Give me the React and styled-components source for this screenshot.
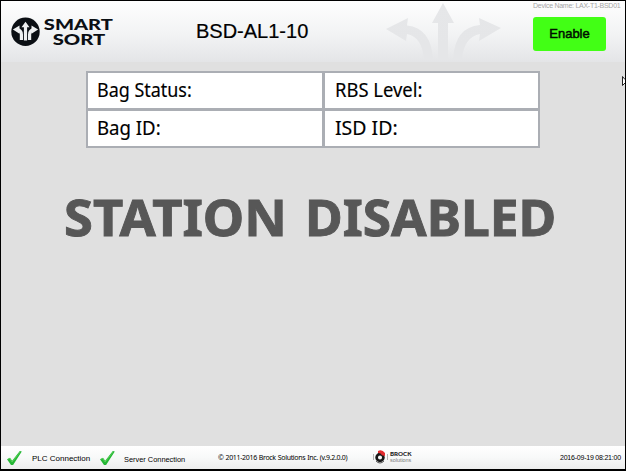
import React from "react";
import styled, { createGlobalStyle } from "styled-components";

const GlobalStyle = createGlobalStyle`
  * { box-sizing: border-box; }
  body { margin: 0; background: #000; overflow: hidden; }
`;

const Screen = styled.div`
  display: flex;
  flex-direction: column;
  width: 626px;
  height: 471px;
  position: relative;
  border: 1px solid #000;
  border-bottom-width: 2px;
  background: #e0e0e0;
  color: #000;
  font-family: "Liberation Sans", Arial, sans-serif;
  white-space: nowrap;
`;

const Header = styled.header`
  display: grid;
  grid-template-columns: 195px 190px 147px 1fr;
  height: 61px;
  background: linear-gradient(#fefefe, #f2f3f4 55%, #e4e5e7);
`;

const Brand = styled.div`
  display: flex;
  padding: 15.5px 0 0 9.5px;
`;

const BrandName = styled.div`
  display: flex;
  flex-direction: column;
  align-items: center;
  margin-left: 3px;
  width: 70px;
  font: 900 15.3px/15.5px Lato, sans-serif;
  color: #0b0f14;
`;

const Label = styled.span`
  display: inline-block;
  transform: scaleX(${(p) => p.$stretch || 1});
  transform-origin: ${(p) => p.$origin || "left"} center;
`;

const StationName = styled.h1`
  margin: 0;
  padding-top: 18px;
  font-size: 20px;
  font-weight: 400;
  line-height: 24px;
  -webkit-text-stroke: 0.2px #000;
`;

const ArrowArea = styled.div`
  height: 61px;
`;

const Actions = styled.div`
  display: flex;
  flex-direction: column;
  align-items: flex-start;
`;

const DeviceName = styled.div`
  width: 90px;
  height: 16px;
  font-size: 7px;
  line-height: 9px;
  letter-spacing: -0.27px;
  color: #a6a6a6;
`;

const EnableButton = styled.button`
  width: 73px;
  height: 34px;
  padding: 0;
  border: 0;
  border-radius: 3px;
  background: #42ff15;
  color: #001000;
  font: 400 13px/34px "Liberation Sans", Arial, sans-serif;
  -webkit-text-stroke: 0.5px #001000;
`;

const Main = styled.main`
  flex: 1;
  padding: 9px 0 0 85px;
`;

const StatusGrid = styled.div`
  display: grid;
  grid-template-columns: 234px 213px;
  grid-template-rows: 35px 35px;
  gap: 3px;
  width: 454px;
  padding: 2px;
  background: #abaeb4;
`;

const Cell = styled.div`
  padding-left: ${(p) => p.$inset}px;
  background: #fff;
  font: 400 19.3px/34px "Noto Sans", Tahoma, sans-serif;
  -webkit-text-stroke: 0.15px #000;
`;

const Notice = styled.div`
  display: grid;
  grid-template-columns: 241px 260px;
  margin: 35px 0 0 -22px;
  font: 700 49.5px/68px "Noto Sans", Tahoma, sans-serif;
  color: #575757;
  -webkit-text-stroke: 0.9px #575757;
`;

const Footer = styled.footer`
  display: grid;
  grid-template-columns: 93px 124px 154px 188px 1fr;
  height: 23px;
  background: linear-gradient(#fff, #f8f9f9 50%, #eceded);
  font-size: 8px;
  line-height: 24px;
`;

const Connection = styled.div`
  display: flex;
  padding: 4px 0 0 5px;
  line-height: ${(p) => p.$line}px;
`;

const ConnectionText = styled.span`
  margin-left: ${(p) => p.$gap}px;
  font-size: ${(p) => p.$size}px;
`;

const FooterText = styled.div`
  font-family: ${(p) => (p.$plain ? '"Noto Sans", sans-serif' : "inherit")};
  font-size: ${(p) => p.$size}px;
  letter-spacing: ${(p) => p.$tracking}px;
  word-spacing: ${(p) => p.$words || 0}px;
`;

const Vendor = styled.div`
  display: flex;
  padding-top: 3px;
`;

const VendorName = styled.div`
  display: flex;
  flex-direction: column;
  padding-top: 1px;
  margin-left: 0;
  font: 400 5.4px/7px "Liberation Sans", sans-serif;
  color: #777;
  b { font: 900 6.2px/8px Lato, sans-serif; color: #222; }
  span { margin-top: -1px; }
`;

const Pointer = styled.svg`
  position: absolute;
  left: 620px;
  top: 74px;
`;

const BrandMark = () => (
  <svg width="30" height="30" viewBox="0 0 30 30">
    <circle cx="14.5" cy="14.8" r="14.2" fill="#0b0f14" />
    <g fill="none" stroke="#eef0f1" strokeWidth="3.2">
      <path d="M14.5 23.5V9M10.4 23v-5.5q0-4-4.2-4.9M18.6 23v-5.5q0-4 4.2-4.9" />
    </g>
    <path d="M14.5 4.8l4 5.4h-8zM1.9 12.6l6.6-4v8.2zM27.1 12.6l-6.6-4v8.2z" fill="#eef0f1" />
  </svg>
);

const BackgroundArrows = () => (
  <svg width="147" height="61" viewBox="386 1 147 61">
    <defs>
      <linearGradient id="arrowFade" x1="0" y1="3" x2="0" y2="60" gradientUnits="userSpaceOnUse">
        <stop stopColor="#e6e7e9" />
        <stop offset="0.7" stopColor="#e5e6e8" />
        <stop offset="1" stopColor="#e5e6e8" />
      </linearGradient>
    </defs>
    <g fill="url(#arrowFade)">
      <path d="M443 3l11 20h-6v36h-10V23h-6z" />
      <path d="M386 29l22-11-1 7.5Q431 28 433 59h-9Q422 37 407 34l-1 7z" />
      <path d="M501 28l-22-10 1 7Q455 27 453 59h9Q464 37 480 34l-1 7z" />
    </g>
  </svg>
);

const Check = () => (
  <svg width="17" height="16" viewBox="0 0 17 16">
    <path d="M1 9.2l3-1.5 2.2 3L13.8 1l2 .5L7.1 15H5z" fill="#25b735" />
    <path d="M2.2 9l1.5-.5 2.4 3.5L14 2" fill="none" stroke="#61d45e" strokeWidth=".8" />
  </svg>
);

const VendorMark = () => (
  <svg width="18" height="16" viewBox="0 0 18 16">
    <circle cx="8" cy="8.5" r="3.4" fill="none" stroke="#181818" strokeWidth="2.7" />
    <path d="M6 2Q10 0 13 4v3l-3-.8Q9 4 6 4z" fill="#e12b2e" />
    <path d="M1.5 5v6M15.5 5v6" stroke="#b3b3b3" strokeWidth="1" />
    <path d="M4 12q4 4 8 0" fill="none" stroke="#555" strokeWidth="1" />
  </svg>
);

export default function App() {
  return (
    <>
      <GlobalStyle />
      <Screen>
        <Header>
          <Brand>
            <BrandMark />
            <BrandName>
              <Label $stretch={1.31} $origin="center">SMART</Label>
              <Label $stretch={1.32} $origin="center">SORT</Label>
            </BrandName>
          </Brand>
          <StationName>BSD-AL1-10</StationName>
          <ArrowArea><BackgroundArrows /></ArrowArea>
          <Actions>
            <DeviceName>Device Name: LAX-T1-BSD01</DeviceName>
            <EnableButton>Enable</EnableButton>
          </Actions>
        </Header>
        <Main>
          <StatusGrid>
            <Cell $inset={9}><Label $stretch={0.93}>Bag Status:</Label></Cell>
            <Cell $inset={10}><Label $stretch={0.955}>RBS Level:</Label></Cell>
            <Cell $inset={9}><Label $stretch={0.965}>Bag ID:</Label></Cell>
            <Cell $inset={10}><Label $stretch={1.01}>ISD ID:</Label></Cell>
          </StatusGrid>
          <Notice>
            <Label $stretch={1.06}>STATION</Label>
            <Label $stretch={1.04}>DISABLED</Label>
          </Notice>
        </Main>
        <Footer>
          <Connection $line={17}>
            <Check />
            <ConnectionText $gap={9} $size={8}>PLC Connection</ConnectionText>
          </Connection>
          <Connection $line={19}>
            <Check />
            <ConnectionText $gap={8} $size={7.4}>Server Connection</ConnectionText>
          </Connection>
          <FooterText $size={7} $tracking={-0.33} $words={0.5} $plain>© 2011-2016 Brock Solutions Inc. (v.9.2.0.0)</FooterText>
          <Vendor>
            <VendorMark />
            <VendorName><b>BROCK</b><span>solutions</span></VendorName>
          </Vendor>
          <FooterText $size={7} $tracking={-0.22}>2016-09-19 08:21:00</FooterText>
        </Footer>
        <Pointer width="4" height="12" viewBox="0 0 4 12">
          <path d="M4 4.5L1.5 1.5v9L4 8" fill="#fff" stroke="#222" strokeWidth="1" />
        </Pointer>
      </Screen>
    </>
  );
}
